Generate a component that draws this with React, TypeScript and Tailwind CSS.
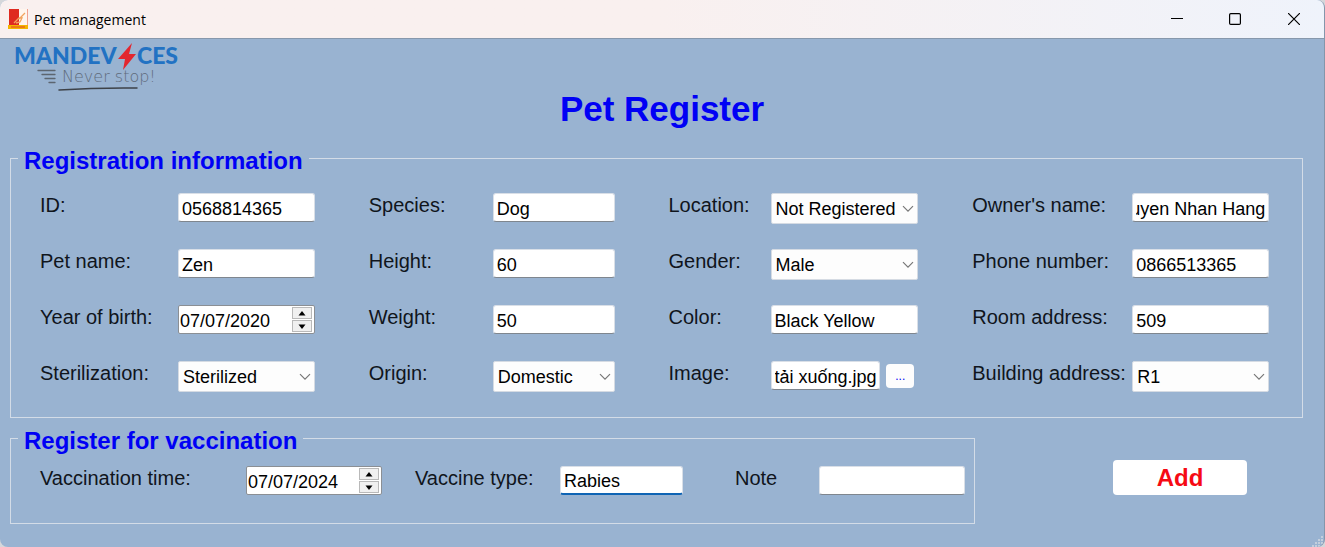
import { useEffect, useRef, type ReactNode } from "react";

const field =
  "block h-[29px] w-full min-w-0 flex-1 rounded-[3px] border border-[#d9dfe7] bg-white px-[3px] pt-[3px] text-[18px] leading-6 text-black outline-none";
const legend =
  "-ml-[22px] px-1.5 pt-1.5 text-[24px] font-bold leading-7 text-[#0000f5]";
const column = "grid min-w-0 auto-rows-[31px] gap-y-[25px]";

function Row({ id, label, children }: { id: string; label: string; children: ReactNode }) {
  return (
    <div className="flex min-w-0 items-start">
      <label htmlFor={id} className="w-[var(--label)] shrink-0 whitespace-nowrap text-[20px] leading-6">
        {label}
      </label>
      {children}
    </div>
  );
}

function TextField({ id, value, atEnd = false, active = false }: { id: string; value: string; atEnd?: boolean; active?: boolean }) {
  const ref = useRef<HTMLInputElement>(null);
  useEffect(() => {
    if (atEnd && ref.current) ref.current.scrollLeft = ref.current.scrollWidth;
  }, [atEnd]);
  return (
    <input
      ref={ref}
      id={id}
      type="text"
      size={1}
      defaultValue={value}
      className={`${field} ${active ? "border-b-2 border-b-[#0f64b4]" : "border-b-[#7f868e]"}`}
    />
  );
}

function SelectField({ id, value }: { id: string; value: string }) {
  return (
    <div className="relative min-w-0 flex-1">
      <select
        id={id}
        defaultValue={value}
        className="block h-[31px] w-full appearance-none rounded-[2px] border border-[#d5dbe3] bg-[#fdfdfd] pl-1 pt-px text-[18px] leading-6 text-black outline-none"
      >
        <option>{value}</option>
      </select>
      <svg viewBox="0 0 12 8" className="pointer-events-none absolute right-1 top-3 h-2 w-3" fill="none" stroke="#777" strokeWidth="1.2">
        <path d="M1 1.2 6 6.2 11 1.2" />
      </svg>
    </div>
  );
}

function DateField({ id, value }: { id: string; value: string }) {
  const spin =
    "flex h-3 w-5 items-center justify-center border border-[#b9b9b9] bg-[#f0f0f0]";
  return (
    <div className="flex h-[29px] min-w-0 flex-1 items-center rounded-[2px] border border-[#8b8f94] bg-white pr-0.5">
      <input id={id} type="text" size={1} defaultValue={value} className="min-w-0 flex-1 bg-transparent pl-px pt-0.5 text-[18px] leading-6 text-black outline-none" />
      <div className="flex flex-col gap-px">
        <button type="button" aria-label="Increase" className={spin}>
          <svg viewBox="0 0 8 5" className="h-[5px] w-2"><path d="M4 0 7.5 4.5h-7z" /></svg>
        </button>
        <button type="button" aria-label="Decrease" className={spin}>
          <svg viewBox="0 0 8 5" className="h-[5px] w-2"><path d="M4 5 .5.5h7z" /></svg>
        </button>
      </div>
    </div>
  );
}

function Logo() {
  return (
    <svg viewBox="0 0 180 54" className="ml-2 h-[54px] w-[180px]" role="img" aria-label="Mandevices">
      <g fontFamily="Lato, sans-serif" fontWeight="900" fontSize="23" fill="#2272c3">
        <text x="6" y="25">MANDEV</text>
        <text x="129" y="25">CES</text>
      </g>
      <path d="M124 4 110 20h7l-2 11 13-16h-7z" fill="#e3262f" />
      <g stroke="#5c6570" strokeWidth="1.3" strokeLinecap="round" fill="none">
        <path d="M30 31.500h17M34 35.500h13M37 39.500h10M41 43.500h6" />
        <path d="M51 51q38-2.500 78-2" stroke="#3d4248" strokeWidth="1.500" />
      </g>
      <text x="54" y="43" fontFamily="'DejaVu Sans', sans-serif" fontWeight="200" fontSize="16" fill="#5f6b7b">
        Never stop!
      </text>
    </svg>
  );
}

export default function App() {
  return (
    <div className="bg-[#d5d7da] font-['Liberation_Sans',Arial,sans-serif] text-[#10151c]">
      <main className="relative flex min-h-screen flex-col overflow-hidden rounded-lg border-r border-[#8496ab] bg-[#99b3d1]">
        <header className="flex h-[39px] items-center border-b border-[#8798ac] bg-linear-to-r from-[#f9f0ef] via-[#f9f0ef] to-[#eff3fb] pl-2">
          <svg viewBox="0 0 20 20" className="mr-1.5 size-5">
            <path fill="#df2a20" d="M1 0h10v17H1z" />
            <path fill="#fff5ee" d="M11 0h9v17h-9z" />
            <path fill="#f4b400" d="M0 16h20v4H0z" />
            <path d="M3 18h14" stroke="#e8681c" strokeWidth="1.500" />
            <path d="M19.500 0v16" stroke="#f0a090" />
            <path d="m17 4-6 6m-5 4 5-5 3 0-2 4-4 1" fill="none" stroke="#f2a35e" strokeWidth="1.300" />
          </svg>
          <span className="flex-1 font-['Open_Sans',sans-serif] text-[14px] text-black">Pet management</span>
          <button type="button" aria-label="Minimize" className="flex h-full w-[58px] items-center justify-center">
            <svg viewBox="0 0 12 12" className="size-3" stroke="#000"><path d="M0 5.500h12" /></svg>
          </button>
          <button type="button" aria-label="Maximize" className="flex h-full w-[58px] items-center justify-center">
            <svg viewBox="0 0 12 12" className="size-3" stroke="#000" strokeWidth="1.200" fill="none"><rect x=".6" y=".6" width="10.800" height="10.800" rx="1.200" /></svg>
          </button>
          <button type="button" aria-label="Close" className="flex h-full w-[60px] items-center justify-center">
            <svg viewBox="0 0 12 12" className="size-3" stroke="#000" strokeWidth="1.200"><path d="m0 0 12 12M12 0 0 12" /></svg>
          </button>
        </header>

        <Logo />
        <h1 className="text-center text-[35px] font-bold leading-8 text-[#0000f5]">Pet Register</h1>

        <form className="mt-4 flex flex-col gap-[3px] pl-2.5 pr-[21px]" onSubmit={(e) => e.preventDefault()}>
          <fieldset className="min-w-0 border border-[#d3dce7] pb-[25px] pl-[29px] pr-[33px]">
            <legend className={legend}>Registration information</legend>
            <div className="grid grid-cols-[minmax(0,275fr)_minmax(0,246fr)_minmax(0,250fr)_minmax(0,297fr)] gap-x-[54px] pt-[18px]">
              <div className={`${column} [--label:138px]`}>
                <Row id="pet-id" label="ID:"><TextField id="pet-id" value="0568814365" /></Row>
                <Row id="pet-name" label="Pet name:"><TextField id="pet-name" value="Zen" /></Row>
                <Row id="birth" label="Year of birth:"><DateField id="birth" value="07/07/2020" /></Row>
                <Row id="steril" label="Sterilization:"><SelectField id="steril" value="Sterilized" /></Row>
              </div>
              <div className={`${column} [--label:124px]`}>
                <Row id="species" label="Species:"><TextField id="species" value="Dog" /></Row>
                <Row id="height" label="Height:"><TextField id="height" value="60" /></Row>
                <Row id="weight" label="Weight:"><TextField id="weight" value="50" /></Row>
                <Row id="origin" label="Origin:"><SelectField id="origin" value="Domestic" /></Row>
              </div>
              <div className={`${column} [--label:102px]`}>
                <Row id="location" label="Location:"><SelectField id="location" value="Not Registered" /></Row>
                <Row id="gender" label="Gender:"><SelectField id="gender" value="Male" /></Row>
                <Row id="color" label="Color:"><TextField id="color" value="Black Yellow" /></Row>
                <Row id="image" label="Image:">
                  <TextField id="image" value="tải xuống.jpg" />
                  <button type="button" aria-label="Browse" className="ml-1.5 mr-1 mt-[3px] h-6 w-7 shrink-0 rounded-[4px] bg-[#fdfdfd] text-[12px] leading-6 text-[#0000f5]">...</button>
                </Row>
              </div>
              <div className={`${column} [--label:160px]`}>
                <Row id="owner" label="Owner's name:"><TextField id="owner" value="Nguyen Nhan Hang" atEnd /></Row>
                <Row id="phone" label="Phone number:"><TextField id="phone" value="0866513365" /></Row>
                <Row id="room" label="Room address:"><TextField id="room" value="509" /></Row>
                <Row id="building" label="Building address:"><SelectField id="building" value="R1" /></Row>
              </div>
            </div>
          </fieldset>

          <div className="grid grid-cols-[minmax(0,965fr)_minmax(0,328fr)] items-start">
            <fieldset className="min-w-0 border border-[#d3dce7] pb-7 pl-[29px] pr-[9px]">
              <legend className={legend}>Register for vaccination</legend>
              <div className="grid grid-cols-[minmax(0,375fr)_minmax(0,320fr)_minmax(0,230fr)] pt-[11px]">
                <div className="pr-[33px] [--label:206px]">
                  <Row id="vac-time" label="Vaccination time:"><DateField id="vac-time" value="07/07/2024" /></Row>
                </div>
                <div className="pr-[52px] [--label:145px]">
                  <Row id="vac-type" label="Vaccine type:"><TextField id="vac-type" value="Rabies" active /></Row>
                </div>
                <div className="[--label:84px]">
                  <Row id="note" label="Note"><TextField id="note" value="" /></Row>
                </div>
              </div>
            </fieldset>
            <div className="flex justify-end pr-14 pt-[39px]">
              <button type="submit" className="h-[35px] w-[134px] rounded-[4px] bg-white text-[24px] font-bold text-[#f60a14]">Add</button>
            </div>
          </div>
        </form>
        <svg viewBox="0 0 12 12" className="absolute bottom-0 right-0 size-3" fill="#c3cfdd">
          <path d="M9 1h2v2H9zM6 4h2v2H6zM9 4h2v2H9zM3 7h2v2H3zM6 7h2v2H6zM9 7h2v2H9zM0 10h2v2H0zM3 10h2v2H3zM6 10h2v2H6z" />
        </svg>
      </main>
    </div>
  );
}
